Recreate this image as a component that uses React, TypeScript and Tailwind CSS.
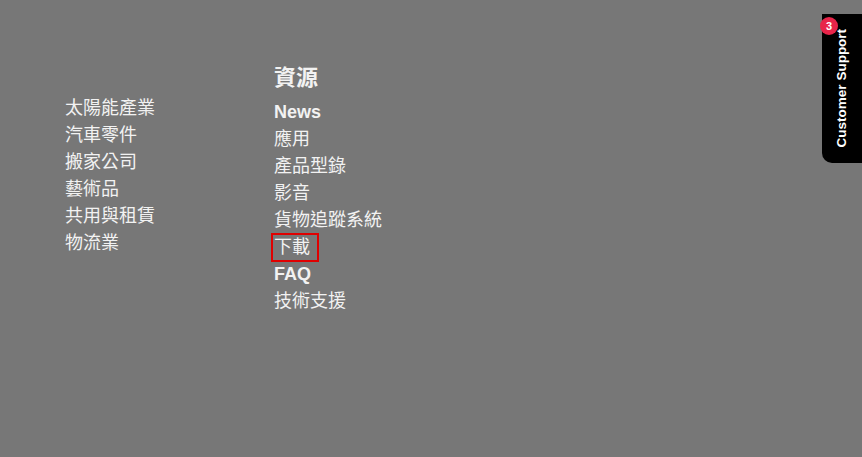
import React from 'react';

const industries = ['太陽能產業', '汽車零件', '搬家公司', '藝術品', '共用與租賃', '物流業'];
const resources = ['News', '應用', '產品型錄', '影音', '貨物追蹤系統', '下載', 'FAQ', '技術支援'];

export default function App() {
  return (
    <div
      className="flex h-[457px] w-[862px] overflow-hidden bg-[#777777] text-[#f2f2f2]"
      style={{ fontFamily: '"Liberation Sans", "Noto Sans CJK TC", sans-serif' }}
    >
      <div className="flex flex-1 pl-[65px] pt-[63px]">
        {/* industries */}
        <ul className="w-[209px] pt-[32px] text-[18px] leading-[27px]">
          {industries.map((item) => (
            <li key={item}>
              <a href="#">{item}</a>
            </li>
          ))}
        </ul>

        {/* resources */}
        <div>
          <h3 className="mb-[6px] text-[22px] font-bold leading-[30px]">資源</h3>
          <ul className="text-[18px] leading-[27px]">
            {resources.map((item) => (
              <li key={item}>
                <a href="#" className={`relative ${/^[A-Z]/.test(item) ? 'font-bold' : ''}`}>
                  {item}
                  {item === '下載' && (
                    <span className="pointer-events-none absolute -left-[3px] -right-[9px] -top-[4px] -bottom-[5px] border-2 border-[#e00000]" />
                  )}
                </a>
              </li>
            ))}
          </ul>
        </div>
      </div>

      {/* customer support tab */}
      <div className="relative mt-[14px] flex h-[149px] w-[40px] shrink-0 items-center justify-center rounded-bl-[10px] bg-black">
        <span className="-rotate-90 whitespace-nowrap text-[13.5px] font-bold text-white">Customer Support</span>
        <span className="absolute -left-[2px] top-[3px] flex h-[18px] w-[18px] items-center justify-center rounded-full bg-[#e8254a] text-[11px] font-bold text-white">
          3
        </span>
      </div>
    </div>
  );
}
